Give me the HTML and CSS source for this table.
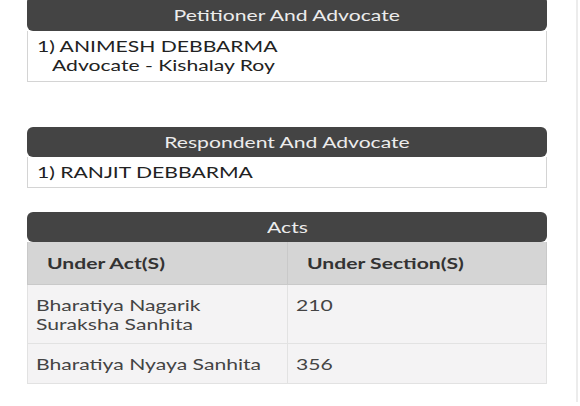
FILE: index.html
```html
<!DOCTYPE html>
<html>
<head>
<meta charset="utf-8">
<link rel="stylesheet" href="styles.css">
</head>
<body>
<div class="page">
  <div class="content">
    <section class="panel panel-first">
      <div class="panel-head panel-head-first"><span class="tx tx-c">Petitioner And Advocate</span></div>
      <div class="panel-body">
        <div><span class="tx">1) ANIMESH DEBBARMA</span></div>
        <div class="indent"><span class="tx">Advocate - Kishalay Roy</span></div>
      </div>
    </section>

    <section class="panel panel-resp">
      <div class="panel-head"><span class="tx tx-c">Respondent And Advocate</span></div>
      <div class="panel-body">
        <div><span class="tx">1) RANJIT DEBBARMA</span></div>
      </div>
    </section>

    <section class="panel panel-acts">
      <div class="panel-head"><span class="tx tx-c">Acts</span></div>
      <table class="acts">
        <thead>
          <tr><th><span class="tx">Under Act(S)</span></th><th><span class="tx">Under Section(S)</span></th></tr>
        </thead>
        <tbody>
          <tr><td><span class="tx">Bharatiya Nagarik<br>Suraksha Sanhita</span></td><td><span class="tx">210</span></td></tr>
          <tr><td><span class="tx">Bharatiya Nyaya Sanhita</span></td><td><span class="tx">356</span></td></tr>
        </tbody>
      </table>
    </section>
  </div>
</div>
</body>
</html>
```

FILE: styles.css
```css
html, body {
  margin: 0;
  padding: 0;
  background: #fff;
}
body {
  font-family: Lato, "Open Sans", sans-serif;
  color: #333;
  overflow: hidden;
}
.page {
  width: 576px;
  height: 406px;
  border-right: 2px solid #ececec;
  box-sizing: content-box;
}
.content {
  padding-left: 27px;
  width: 520px;
}
.tx {
  display: inline-block;
  transform: scaleX(1.32);
  transform-origin: left center;
  white-space: nowrap;
}
.tx-c {
  transform-origin: center center;
}
.panel-first {
  margin-top: -4px;
}
.panel-resp {
  margin-top: 45px;
}
.panel-acts {
  margin-top: 24px;
}
.panel-head {
  background: #444444;
  color: #ececec;
  border-radius: 6px;
  height: 30px;
  line-height: 30px;
  text-align: center;
  font-size: 16px;
}
.panel-head-first {
  height: 35px;
  line-height: 38px;
}
.panel-body {
  border: 1px solid #d4d4d4;
  border-top: none;
  padding: 5px 9px 6px 9px;
  font-size: 16px;
  line-height: 19px;
  color: #222;
}
.panel-first .panel-body {
  padding-bottom: 7px;
}
.indent {
  padding-left: 15px;
}
.acts {
  width: 100%;
  border-collapse: collapse;
  font-size: 16px;
  line-height: 19px;
}
.acts th {
  background: #d5d5d5;
  color: #333;
  font-weight: 700;
  text-align: left;
  padding: 11px 19px 12px;
  height: 19px;
  border: 1px solid #c9c9c9;
  border-top: none;
}
.acts th:first-child { width: 221px; }
.acts td {
  background: #f4f3f4;
  color: #444;
  vertical-align: top;
  padding: 10px 8px 10px 8px;
  border: 1px solid #e2e2e2;
}
```
